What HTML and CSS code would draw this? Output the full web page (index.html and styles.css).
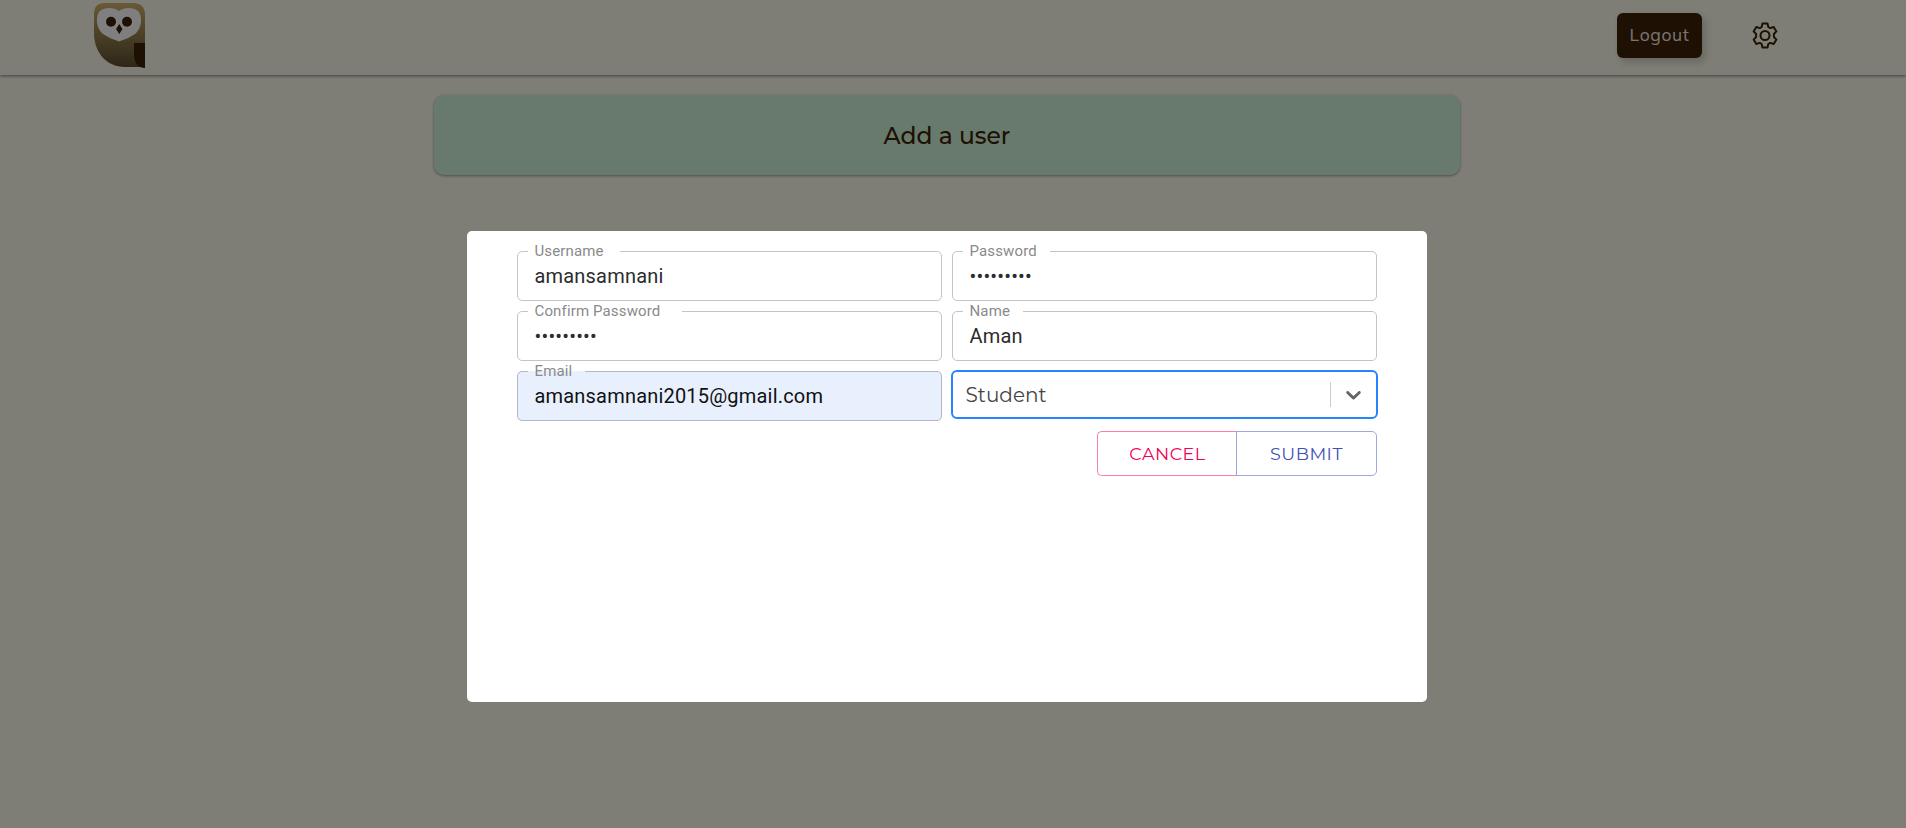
FILE: index.html
```html
<!DOCTYPE html>
<html lang="en">
<head>
<meta charset="utf-8">
<title>Add a user</title>
<link rel="stylesheet" href="styles.css">
</head>
<body>
<header class="topbar">
  <svg class="logo" width="51" height="66" viewBox="0 0 51 66">
    <defs><linearGradient id="body" x1="0" y1="0" x2="0" y2="1">
      <stop offset="0" stop-color="#d0b46c"/><stop offset="1" stop-color="#5c4d30"/>
    </linearGradient></defs>
    <path d="M11 0H39Q51 0 51 12V64H31C12 64 0 49 0 30V11Q0 0 11 0Z" fill="url(#body)"/>
    <path d="M25 8C30 4 41 4 45 9C49 16 47 26 41 31Q34 36 25 38.500Q16 36 9 31C3 26 1 16 5 9C9 4 20 4 25 8Z" fill="#fff"/>
    <circle cx="17" cy="18.700" r="5" fill="#3d2104"/><circle cx="33" cy="18.700" r="5" fill="#3d2104"/>
    <path d="M25.300 21L28.500 26L25.300 31L22 26Z" fill="#3d2104"/>
    <path d="M40 40H51V65C44 65 40 59 40 52Z" fill="#3d2104"/>
  </svg>
  <div class="actions">
    <button class="logout">Logout</button>
    <svg class="gear" width="26" height="27" viewBox="0 0 26 27" fill="none" stroke="#3d2104" stroke-width="2">
      <circle cx="13" cy="13.500" r="4.500"/>
      <path stroke-linejoin="round" d="M10.500 1.500H15.500L16.300 5L18.200 6.100L21.700 5L24.400 9.400L21.900 12V15L24.400 17.600L21.700 22L18.200 20.900L16.300 22L15.500 25.500H10.500L9.700 22L7.800 20.900L4.300 22L1.600 17.600L4.100 15V12L1.600 9.400L4.300 5L7.800 6.100L9.700 5Z"/>
    </svg>
  </div>
</header>
<main><h1 class="banner"><span>Add a user</span></h1></main>
<div class="backdrop">
  <form class="modal">
    <div class="grid">
      <fieldset class="field"><legend class="n-user">Username</legend><input class="value" type="text" value="amansamnani"></fieldset>
      <fieldset class="field"><legend class="n-pass">Password</legend><input class="value" type="password" value="aaaaaaaaa"></fieldset>
      <fieldset class="field"><legend class="n-confirm">Confirm Password</legend><input class="value" type="password" value="aaaaaaaaa"></fieldset>
      <fieldset class="field"><legend class="n-name">Name</legend><input class="value" type="text" value="Aman"></fieldset>
      <fieldset class="field filled"><legend class="n-email">Email</legend><input class="value" type="text" value="amansamnani2015@gmail.com"></fieldset>
      <div class="select">
        <span class="choice">Student</span><span class="divider"></span>
        <svg class="chevron" width="25" height="25" viewBox="0 0 20 20" fill="#666"><path d="M4.516 7.548c.436-.446 1.043-.481 1.576 0L10 11.295l3.908-3.747c.533-.481 1.141-.446 1.574 0 .436.445.408 1.197 0 1.615-.406.418-4.695 4.502-4.695 4.502a1.095 1.095 0 0 1-1.576 0S4.924 9.581 4.516 9.163s-.436-1.170 0-1.615z"/></svg>
      </div>
    </div>
    <div class="buttons">
      <button type="button" class="btn cancel"><span>CANCEL</span></button><button type="button" class="btn submit"><span>SUBMIT</span></button>
    </div>
  </form>
</div>
</body>
</html>
```
FILE: styles.css
```css
* { box-sizing: border-box; }
body { margin: 0; height: 828px; overflow: hidden; background: #fffcec; font-family: Montserrat, sans-serif; }
.topbar { height: 75px; padding: 3px 128px 0 94px; display: flex; justify-content: space-between; background: #fffdec; box-shadow: 0 1px 3px rgba(0,0,0,.5); }
.actions { display: flex; align-items: flex-start; padding-top: 10px; gap: 50px; }
.logout { width: 85px; height: 45px; padding: 0 0 3px; border: 0; border-radius: 6px; background: #3d2104; color: #f4e9e6; font: 17.500px Muli, Mulish, Nunito, "Open Sans", sans-serif; letter-spacing: .6px; box-shadow: 3px 4px 8px rgba(0,0,0,.2); }
.gear { margin-top: 9px; }
main { display: flex; justify-content: center; padding: 20px 12px 0 0; }
.banner { width: 1026px; height: 80px; margin: 0; border-radius: 10px; background: #d1f5dd; color: #3d2104; display: flex; align-items: center; justify-content: center; font: 550 23.400px Montserrat, Inter, sans-serif; box-shadow: 0 1px 3px rgba(0,0,0,.4); }
.backdrop { position: fixed; inset: 0; padding: 231px 0 0 467px; background: rgba(0,0,0,.5); }
.modal { width: 960px; height: 471px; padding: 20px 50px; border-radius: 5px; background: #fff; }
.grid { display: grid; grid-template-columns: 425px 425px; grid-auto-rows: 50px; gap: 10px; }
.field { height: 57px; min-width: 0; margin: -7px 0 0; padding: 0 16.500px; border: 1px solid #c4c4c4; border-radius: 5px; color: #2c2c2c; font-family: Roboto, sans-serif; }
.field legend { height: 15px; margin-left: -7px; padding: 0 0 0 7px; line-height: 15px; font-size: 15px; letter-spacing: .14px; color: #8a8a8a; white-space: nowrap; }
.n-user { width: 92px; }
.n-pass { width: 87px; }
.n-confirm { width: 154px; }
.n-name { width: 60px; }
.n-email { width: 57px; }
.value { display: block; width: 100%; height: 33px; padding: 0; border: 0; outline: 0; background: transparent; color: inherit; font: 20px Roboto, sans-serif; letter-spacing: .19px; }
.filled { background: #e8f0fe; border-color: #b2b8c3; color: #111; }
.select { width: 427px; height: 49px; margin: -1px 0 0 -1px; padding: 0 10px 0 12.500px; display: flex; align-items: center; border: 2px solid #2684ff; border-radius: 6px; }
.choice { flex: 1; color: #444; font: 400 20px Montserrat, Inter, sans-serif; }
.divider { width: 1px; height: 25px; background: #ccc; margin-right: 10px; }
.buttons { display: flex; justify-content: flex-end; margin-top: 10px; }
.btn { width: 140px; height: 45px; padding: 0 0 1px; background: transparent; font: 400 17.500px Montserrat, Inter, sans-serif; letter-spacing: .5px; }
.cancel { border: 1px solid #fa80a7; border-right: 0; border-radius: 5px 0 0 5px; color: #f50057; }
.submit { width: 141px; margin-left: -1px; border: 1px solid #9fa8da; border-radius: 0 5px 5px 0; color: #3f51b5; }
```
